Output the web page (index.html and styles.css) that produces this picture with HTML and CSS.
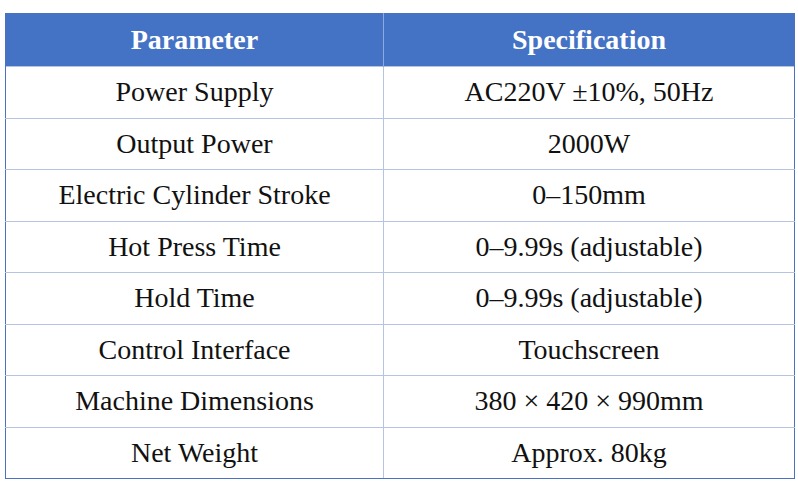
FILE: index.html
```html
<!DOCTYPE html>
<html>
<head>
<meta charset="utf-8">
<link rel="stylesheet" href="styles.css">
</head>
<body>
<table class="spec">
<colgroup><col class="c1"><col class="c2"></colgroup>
<thead>
<tr><th>Parameter</th><th>Specification</th></tr>
</thead>
<tbody>
<tr><td>Power Supply</td><td>AC220V ±10%, 50Hz</td></tr>
<tr><td>Output Power</td><td>2000W</td></tr>
<tr><td>Electric Cylinder Stroke</td><td>0–150mm</td></tr>
<tr><td>Hot Press Time</td><td>0–9.99s (adjustable)</td></tr>
<tr><td>Hold Time</td><td>0–9.99s (adjustable)</td></tr>
<tr><td>Control Interface</td><td>Touchscreen</td></tr>
<tr><td>Machine Dimensions</td><td>380 × 420 × 990mm</td></tr>
<tr><td>Net Weight</td><td>Approx. 80kg</td></tr>
</tbody>
</table>
</body>
</html>
```
FILE: styles.css
```css
html, body {
  margin: 0;
  padding: 0;
  background: #ffffff;
}
body {
  padding: 13px 0 0 5px;
  font-family: "Liberation Serif", "Times New Roman", serif;
}
.spec {
  width: 789px;
  border-collapse: collapse;
  border: 1px solid #4a72c0;
  table-layout: fixed;
}
.c1 { width: 378px; }
.c2 { width: 411px; }
.spec th, .spec td {
  text-align: center;
  padding: 0;
  font-size: 28px;
  color: #111111;
}
.spec th {
  background: #4472c4;
  color: #ffffff;
  font-weight: bold;
  height: 52px;
  border-left: 1px solid #8fa9dc;
}
.spec td {
  height: 50.5px;
  border: 1px solid #b4c4e4;
}
.spec tr td:first-child, .spec tr th:first-child {
  border-left: 1px solid #4a72c0;
}
.spec tr td:last-child {
  border-right: 1px solid #4a72c0;
}
.spec tbody tr:last-child td {
  border-bottom: 1px solid #4a72c0;
}
```
